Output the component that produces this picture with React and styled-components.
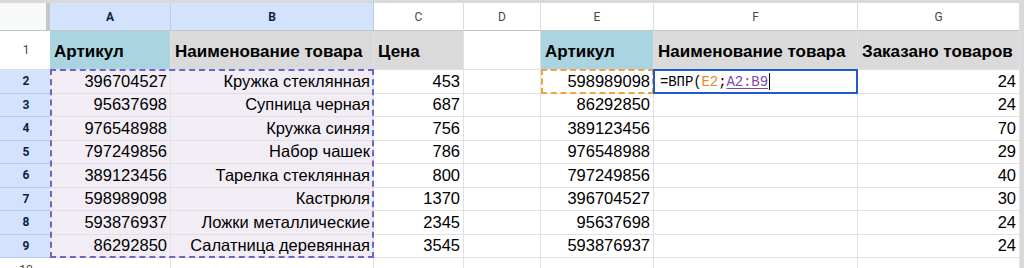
import React from "react";
import styled, { createGlobalStyle, css } from "styled-components";

const GlobalStyle = createGlobalStyle`
  html, body {
    margin: 0;
    padding: 0;
    background: #fff;
    overflow: hidden;
  }
`;

const COLS = ["A", "B", "C", "D", "E", "F", "G"];

const rows = [
  ["396704527", "Кружка стеклянная", "453", "598989098", "24"],
  ["95637698", "Супница черная", "687", "86292850", "24"],
  ["976548988", "Кружка синяя", "756", "389123456", "70"],
  ["797249856", "Набор чашек", "786", "976548988", "29"],
  ["389123456", "Тарелка стеклянная", "800", "797249856", "40"],
  ["598989098", "Кастрюля", "1370", "396704527", "30"],
  ["593876937", "Ложки металлические", "2345", "95637698", "24"],
  ["86292850", "Салатница деревянная", "3545", "593876937", "24"],
];

const Frame = styled.div`
  width: 1024px;
  height: 268px;
  box-sizing: border-box;
  padding: 3px 4px 0 0;
  background: #d9d9d9;
`;

const Sheet = styled.div`
  display: grid;
  grid-template-columns: 50px 121px 203px 90px 77px 113px 204px 162px;
  grid-template-rows: 28px 39px repeat(8, 23.5px) 1fr;
  height: 100%;
  background: #fff;
  font-family: "Liberation Sans", Arial, sans-serif;
  color: #000;
`;

const Corner = styled.div`
  grid-row: 1;
  grid-column: 1;
  background: #f8f9fa;
  border-right: 4px solid #c4c7c5;
  border-bottom: 1px solid #c4c7c5;
`;

const ColHead = styled.div`
  grid-row: 1;
  grid-column: ${(p) => p.$col};
  display: flex;
  align-items: center;
  justify-content: center;
  font-family: Roboto, "Liberation Sans", sans-serif;
  font-size: 12px;
  color: #444746;
  background: #fff;
  border-right: 1px solid #dadce0;
  border-bottom: 1px solid #c4c7c5;
  ${(p) =>
    p.$active &&
    css`
      background: #d3e3fd;
      color: #0b1f44;
      font-weight: 700;
      border-right-color: #b9cbeb;
    `}
`;

const RowHead = styled.div`
  grid-row: ${(p) => p.$row};
  grid-column: 1;
  display: flex;
  align-items: ${(p) => (p.$cut ? "flex-start" : "center")};
  padding-top: ${(p) => (p.$cut ? "5px" : "0")};
  justify-content: center;
  box-sizing: border-box;
  margin-right: -3px;
  font-family: Roboto, "Liberation Sans", sans-serif;
  font-size: 12px;
  color: #444746;
  background: #fff;
  border-right: 1px solid #c4c7c5;
  border-bottom: 1px solid #dadce0;
  ${(p) =>
    p.$active &&
    css`
      background: #d3e3fd;
      color: #0b1f44;
      font-weight: 700;
      border-bottom-color: #b9cbeb;
    `}
`;

const Cell = styled.div`
  grid-row: ${(p) => p.$row};
  grid-column: ${(p) => p.$col};
  display: flex;
  align-items: flex-end;
  justify-content: ${(p) => (p.$left ? "flex-start" : "flex-end")};
  box-sizing: border-box;
  padding: 0 3px 2px 4px;
  min-width: 0;
  overflow: hidden;
  white-space: nowrap;
  font-size: 16.5px;
  line-height: 19px;
  background: ${(p) => p.$bg || "#fff"};
  border-right: 1px solid #e1e1e1;
  border-bottom: 1px solid #e1e1e1;
  ${(p) =>
    p.$head &&
    css`
      align-items: center;
      padding: 3px 4px 0;
      font-size: 17px;
      font-weight: 700;
    `}
`;

const Marquee = styled.div`
  grid-row: ${(p) => p.$rows};
  grid-column: ${(p) => p.$cols};
  z-index: 2;
  pointer-events: none;
  margin: -1px 0 0 0;
  border: 2px dashed ${(p) => p.$color};
`;

const EditCell = styled.div`
  grid-row: 3;
  grid-column: 7;
  z-index: 3;
  display: flex;
  align-items: center;
  margin: -1px 0 0 -1px;
  padding: 1px 5px 0;
  background: #fff;
  border: 2px solid #1f5bcc;
  font-family: "Liberation Mono", "DejaVu Sans Mono", monospace;
  font-size: 14px;
  letter-spacing: -0.1px;
  white-space: nowrap;
`;

const Ref = styled.span`
  color: ${(p) => p.$color};
  text-decoration: ${(p) => (p.$underline ? "underline" : "none")};
  text-underline-offset: 2px;
`;

const Caret = styled.span`
  display: inline-block;
  width: 1px;
  height: 17px;
  margin-left: 1px;
  background: #000;
`;

const RANGE_BG = "#f2edf5";
const HEAD_BLUE = "#aad4df";
const HEAD_GRAY = "#dadada";

export default function App() {
  return (
    <>
      <GlobalStyle />
      <Frame>
        <Sheet>
          <Corner />
          {COLS.map((c, i) => (
            <ColHead key={c} $col={i + 2} $active={c === "A" || c === "B"}>
              {c}
            </ColHead>
          ))}

          <RowHead $row={2}>1</RowHead>
          <Cell $row={2} $col={2} $head $left $bg={HEAD_BLUE}>
            Артикул
          </Cell>
          <Cell $row={2} $col={3} $head $left $bg={HEAD_GRAY}>
            Наименование товара
          </Cell>
          <Cell $row={2} $col={4} $head $left $bg={HEAD_GRAY}>
            Цена
          </Cell>
          <Cell $row={2} $col={5} $head />
          <Cell $row={2} $col={6} $head $left $bg={HEAD_BLUE}>
            Артикул
          </Cell>
          <Cell $row={2} $col={7} $head $left $bg={HEAD_GRAY}>
            Наименование товара
          </Cell>
          <Cell $row={2} $col={8} $head $left $bg={HEAD_GRAY}>
            Заказано товаров
          </Cell>

          {rows.map((r, i) => {
            const row = i + 3;
            return (
              <React.Fragment key={row}>
                <RowHead $row={row} $active>
                  {i + 2}
                </RowHead>
                <Cell $row={row} $col={2} $bg={RANGE_BG}>
                  {r[0]}
                </Cell>
                <Cell $row={row} $col={3} $bg={RANGE_BG}>
                  {r[1]}
                </Cell>
                <Cell $row={row} $col={4}>{r[2]}</Cell>
                <Cell $row={row} $col={5} />
                <Cell $row={row} $col={6}>{r[3]}</Cell>
                <Cell $row={row} $col={7} />
                <Cell $row={row} $col={8}>{r[4]}</Cell>
              </React.Fragment>
            );
          })}

          <RowHead $row={11} $cut>
            10
          </RowHead>
          {COLS.map((c, i) => (
            <Cell key={c} $row={11} $col={i + 2} />
          ))}

          <Marquee $rows="3 / 11" $cols="2 / 4" $color="#6c66c6" />
          <Marquee $rows="3" $cols="6" $color="#f3a241" />
          <EditCell>
            =ВПР(
            <Ref $color="#e8862a">E2</Ref>;
            <Ref $color="#7e4aa8" $underline>
              A2:B9
            </Ref>
            <Caret />
          </EditCell>
        </Sheet>
      </Frame>
    </>
  );
}
